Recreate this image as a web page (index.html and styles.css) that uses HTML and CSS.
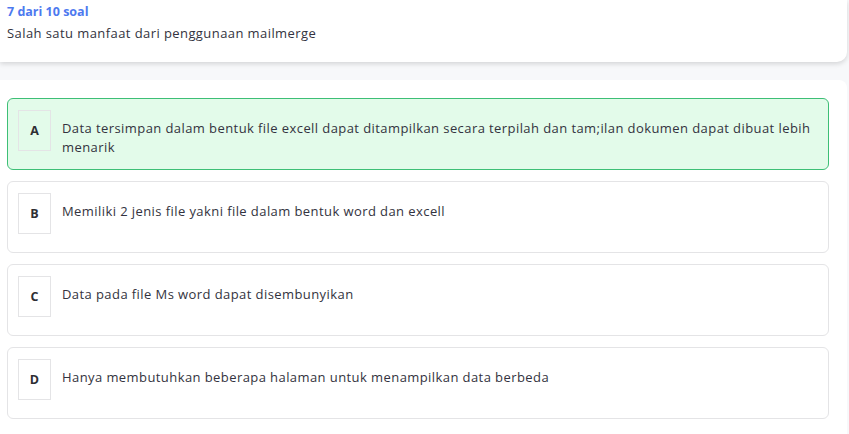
FILE: index.html
```html
<!DOCTYPE html>
<html lang="id">
<head>
  <meta charset="UTF-8">
  <meta name="viewport" content="width=device-width, initial-scale=1.0">
  <title>Soal</title>
  <link rel="stylesheet" href="styles.css">
</head>
<body>
  <div class="question-card">
    <div class="question-count">7 dari 10 soal</div>
    <p class="question-text">Salah satu manfaat dari penggunaan mailmerge</p>
  </div>

  <div class="answers-card">
    <div class="option selected">
      <div class="option-letter">A</div>
      <div class="option-text">Data tersimpan dalam bentuk file excell dapat ditampilkan secara terpilah dan tam;ilan dokumen dapat dibuat lebih menarik</div>
    </div>
    <div class="option">
      <div class="option-letter">B</div>
      <div class="option-text">Memiliki 2 jenis file yakni file dalam bentuk word dan excell</div>
    </div>
    <div class="option">
      <div class="option-letter">C</div>
      <div class="option-text">Data pada file Ms word dapat disembunyikan</div>
    </div>
    <div class="option">
      <div class="option-letter">D</div>
      <div class="option-text">Hanya membutuhkan beberapa halaman untuk menampilkan data berbeda</div>
    </div>
  </div>
</body>
</html>
```

FILE: styles.css
```css
body {
  margin: 0;
  background-color: #f7f8fa;
  font-family: "Open Sans", "Liberation Sans", sans-serif;
  color: #333340;
}

.question-card {
  width: 833px;
  background-color: #ffffff;
  border-radius: 0 0 10px 0;
  box-shadow: 0 2px 5px rgba(0, 0, 0, 0.14);
  padding: 3px 7px 19px;
}

.question-count {
  font-size: 12.5px;
  font-weight: 700;
  color: #4d79ef;
  line-height: 18px;
}

.question-text {
  margin: 2px 0 0;
  font-size: 13px;
  line-height: 20px;
  letter-spacing: 0.42px;
}

.answers-card {
  width: 822px;
  margin-top: 18px;
  background-color: #ffffff;
  border-radius: 0 8px 0 0;
  padding: 18px 18px 4px 7px;
}

.option {
  display: flex;
  align-items: flex-start;
  gap: 11px;
  box-sizing: border-box;
  min-height: 72px;
  border: 1px solid #e4e4e6;
  border-radius: 6px;
  padding: 11px 10px;
  margin-bottom: 11px;
  background-color: #ffffff;
}

.option.selected {
  background-color: #e3fbea;
  border-color: #3dbf76;
}

.option-letter {
  flex: none;
  width: 31px;
  height: 39px;
  border: 1px solid #e4e4e6;
  display: flex;
  align-items: center;
  justify-content: center;
  font-size: 12.5px;
  font-weight: 700;
  color: #2e2e33;
}

.option-text {
  font-size: 13px;
  line-height: 19px;
  padding-top: 9px;
  letter-spacing: 0.42px;
}
```
